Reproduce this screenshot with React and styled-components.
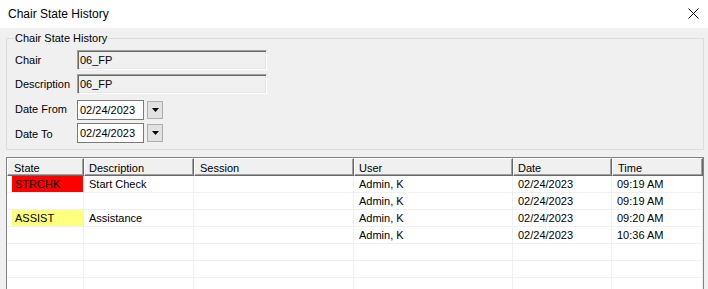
import React from "react";
import styled, { createGlobalStyle } from "styled-components";

const Global = createGlobalStyle`
  html, body { margin: 0; padding: 0; background: #f0f0f0; }
  body { font-family: "Liberation Sans", Arial, sans-serif; font-size: 11px; color: #000; }
`;

const Window = styled.div`
  width: 708px;
  height: 289px;
  overflow: hidden;
  background: #f0f0f0;
  display: flex;
  flex-direction: column;
`;

const TitleBar = styled.div`
  height: 28px;
  flex: none;
  background: #fff;
  display: flex;
  align-items: center;
  justify-content: space-between;
  padding: 0 9px 1px 8px;
  box-sizing: border-box;
  font-size: 12px;
`;

const CloseIcon = () => (
  <svg width="11" height="11" viewBox="0 0 11 11">
    <path d="M0.5 0.5 L10.5 10.5 M10.5 0.5 L0.5 10.5" stroke="#000" strokeWidth="1" fill="none" />
  </svg>
);

const Body = styled.div`
  padding: 3px 4px 0 6px;
  display: flex;
  flex-direction: column;
  gap: 7px;
`;

const GroupBox = styled.fieldset`
  margin: 0;
  border: 1px solid #dcdcdc;
  padding: 5px 7px 6px 7px;
  display: grid;
  grid-template-columns: 63px auto 1fr;
  align-items: center;
  row-gap: 4px;
`;

const Legend = styled.legend`
  padding: 0 1px;
  line-height: 14px;
`;

const Label = styled.span`
  padding-left: 1px;
  grid-column: 1;
`;

const ReadOnlyBox = styled.div`
  grid-column: 2 / span 2;
  width: 190px;
  height: 20px;
  box-sizing: border-box;
  background: #f0f0f0;
  border-top: 1px solid #a0a0a0;
  border-left: 1px solid #a0a0a0;
  border-right: 1px solid #fff;
  border-bottom: 1px solid #fff;
  box-shadow: inset 1px 1px 0 #696969, inset -1px -1px 0 #e3e3e3;
  padding: 2px 0 0 2px;
  line-height: 15px;
`;

const DateRow = styled.div`
  grid-column: 2 / span 2;
  display: flex;
  align-items: center;
  gap: 3px;
  margin-top: ${(p) => p.$mt || 0}px;
`;

const DateBox = styled.div`
  width: 67px;
  height: 20px;
  box-sizing: border-box;
  background: #fff;
  border: 1px solid #7a7a7a;
  padding: 0 0 0 2px;
  line-height: 18px;
  white-space: nowrap;
  overflow: hidden;
`;

const DropButton = styled.div`
  width: 16px;
  height: 18px;
  box-sizing: border-box;
  background: #e1e1e1;
  border: 1px solid #adadad;
  display: flex;
  align-items: center;
  justify-content: center;
`;

const Arrow = () => (
  <svg width="7" height="4" viewBox="0 0 7 4">
    <path d="M0 0 H7 L3.5 4 Z" fill="#000" />
  </svg>
);

const Grid = styled.div`
  border: 1px solid #828282;
  background: #fff;
  display: grid;
  grid-template-columns: 77px 110px 160px 159px 99px 91px;
  width: 698px;
  box-sizing: border-box;
`;

const HeadCell = styled.div`
  height: 18px;
  box-sizing: border-box;
  background: #f0f0f0;
  border-top: 1px solid #fff;
  border-left: 1px solid #fff;
  border-right: 1px solid #696969;
  border-bottom: 1px solid #696969;
  box-shadow: inset -1px -1px 0 #a0a0a0;
  padding: 2px 0 0 ${(p) => p.$pl || 5}px;
  line-height: 14px;
  white-space: nowrap;
`;

const Cell = styled.div`
  height: 17px;
  box-sizing: border-box;
  border-right: 1px solid #f0f0f0;
  border-bottom: 1px solid #f0f0f0;
  padding-left: 5px;
  line-height: 16px;
  white-space: nowrap;
  overflow: hidden;
`;

const StateFill = styled.div`
  height: 16px;
  padding-left: 3px;
  background: ${(p) => (p.$tone === "red" ? "#ff0000" : p.$tone === "yellow" ? "#ffff80" : "transparent")};
`;

const columns = [
  { key: "state", title: "State", pl: 6 },
  { key: "desc", title: "Description", pl: 4 },
  { key: "session", title: "Session", pl: 5 },
  { key: "user", title: "User", pl: 4 },
  { key: "date", title: "Date", pl: 4 },
  { key: "time", title: "Time", pl: 5 },
];

const rows = [
  { state: "STRCHK", tone: "red", desc: "Start Check", session: "", user: "Admin, K", date: "02/24/2023", time: "09:19 AM" },
  { state: "", desc: "", session: "", user: "Admin, K", date: "02/24/2023", time: "09:19 AM" },
  { state: "ASSIST", tone: "yellow", desc: "Assistance", session: "", user: "Admin, K", date: "02/24/2023", time: "09:20 AM" },
  { state: "", desc: "", session: "", user: "Admin, K", date: "02/24/2023", time: "10:36 AM" },
  {}, {}, {}, {},
];

export default function App() {
  return (
    <>
      <Global />
      <Window>
        <TitleBar>
          <span>Chair State History</span>
          <CloseIcon />
        </TitleBar>
        <Body>
          <GroupBox>
            <Legend>Chair State History</Legend>
            <Label>Chair</Label>
            <ReadOnlyBox>06_FP</ReadOnlyBox>
            <Label>Description</Label>
            <ReadOnlyBox>06_FP</ReadOnlyBox>
            <Label>Date From</Label>
            <DateRow $mt={2}>
              <DateBox>02/24/2023</DateBox>
              <DropButton><Arrow /></DropButton>
            </DateRow>
            <Label>Date To</Label>
            <DateRow $mt={-1}>
              <DateBox>02/24/2023</DateBox>
              <DropButton><Arrow /></DropButton>
            </DateRow>
          </GroupBox>
          <Grid>
            {columns.map((c) => (
              <HeadCell key={c.key} $pl={c.pl}>{c.title}</HeadCell>
            ))}
            {rows.map((r, i) =>
              columns.map((c) =>
                c.key === "state" ? (
                  <Cell key={i + c.key}>
                    <StateFill $tone={r.tone}>{r.state}</StateFill>
                  </Cell>
                ) : (
                  <Cell key={i + c.key}>{r[c.key]}</Cell>
                )
              )
            )}
          </Grid>
        </Body>
      </Window>
    </>
  );
}
